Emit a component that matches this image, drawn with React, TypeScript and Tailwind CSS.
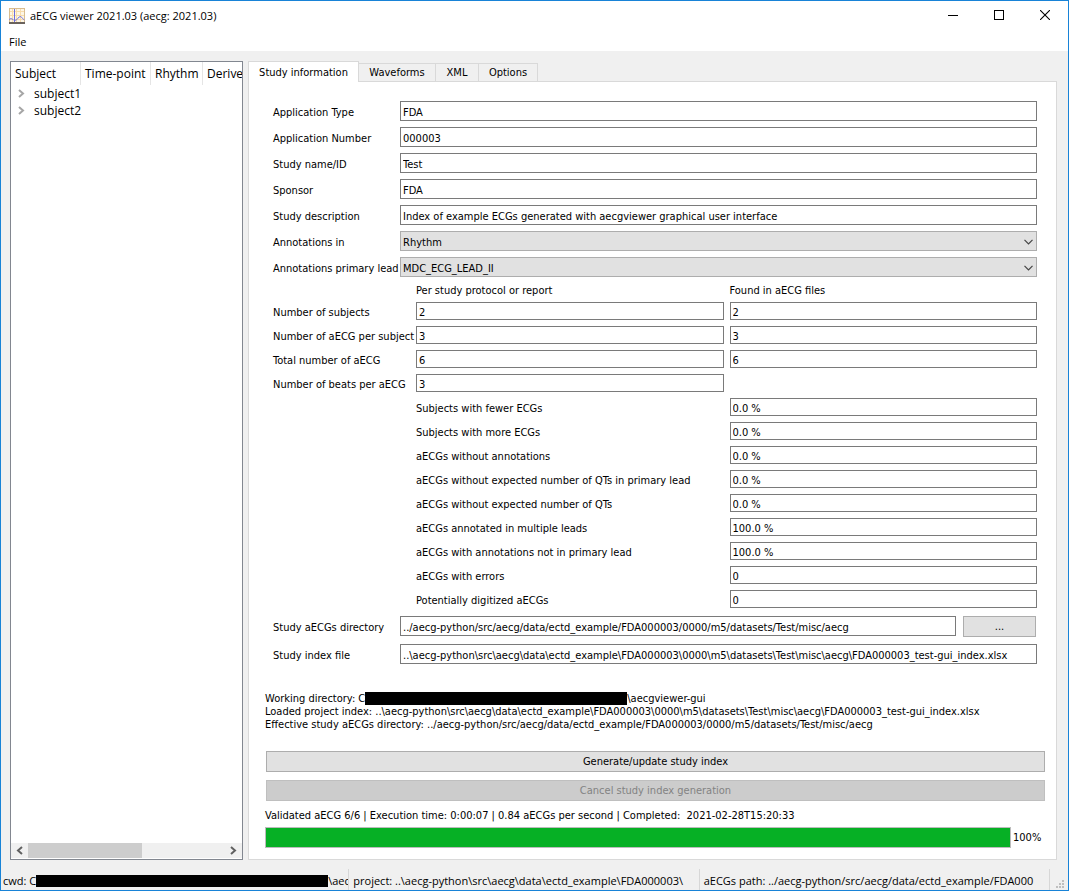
import React from "react";

type Field = { id: string; label: string; value: string };

const studyFields: Field[] = [
  { id: "app-type", label: "Application Type", value: "FDA" },
  { id: "app-number", label: "Application Number", value: "000003" },
  { id: "study-name", label: "Study name/ID", value: "Test" },
  { id: "sponsor", label: "Sponsor", value: "FDA" },
  {
    id: "description",
    label: "Study description",
    value: "Index of example ECGs generated with aecgviewer graphical user interface",
  },
];

const studySelects: Field[] = [
  { id: "annotations-in", label: "Annotations in", value: "Rhythm" },
  { id: "primary-lead", label: "Annotations primary lead", value: "MDC_ECG_LEAD_II" },
];

const countRows: { id: string; label: string; expected: string; found?: string }[] = [
  { id: "subjects", label: "Number of subjects", expected: "2", found: "2" },
  { id: "per-subject", label: "Number of aECG per subject", expected: "3", found: "3" },
  { id: "total", label: "Total number of aECG", expected: "6", found: "6" },
  { id: "beats", label: "Number of beats per aECG", expected: "3" },
];

const checkRows: Field[] = [
  { id: "fewer", label: "Subjects with fewer ECGs", value: "0.0 %" },
  { id: "more", label: "Subjects with more ECGs", value: "0.0 %" },
  { id: "no-annotations", label: "aECGs without annotations", value: "0.0 %" },
  { id: "qts-primary", label: "aECGs without expected number of QTs in primary lead", value: "0.0 %" },
  { id: "qts", label: "aECGs without expected number of QTs", value: "0.0 %" },
  { id: "multi-leads", label: "aECGs annotated in multiple leads", value: "100.0 %" },
  { id: "not-primary", label: "aECGs with annotations not in primary lead", value: "100.0 %" },
  { id: "errors", label: "aECGs with errors", value: "0" },
  { id: "digitized", label: "Potentially digitized aECGs", value: "0" },
];

const inputBase = "w-full min-w-0 border border-[#7a7a7a] bg-white px-0.5 pt-0.5 outline-none";
const tallInput = inputBase + " h-5";
const shortInput = inputBase + " h-[18px]";
const labelStyle = "pt-0.5 whitespace-nowrap";

function AppIcon() {
  return (
    <svg width="16" height="16" viewBox="0 0 16 16" aria-hidden="true" shapeRendering="crispEdges">
      <rect width="16" height="16" fill="#fdf6e6" />
      <path d="M3.5 0v16M7.5 0v16M11.5 0v16M0 3.5h16M0 7.5h16M0 11.5h16" stroke="#f8dcab" />
      <path d="M.5 15V.5h15V15" fill="none" stroke="#d9bd8f" />
      <path d="M0 15.5h16M0 14.5h16" stroke="#6a625c" />
      <path
        d="M0 11.5l2-1 2 1 1 1"
        fill="none"
        stroke="#7d7de0"
        shapeRendering="auto"
      />
      <path d="M5.5 1v13" stroke="#6f6fdc" />
      <path d="M6 12.5l2-1 2-2.5 2-.5 1.5 2 2 1.5" fill="none" stroke="#7d7de0" shapeRendering="auto" />
    </svg>
  );
}

function Chevron({ direction, className }: { direction: "left" | "right"; className: string }) {
  return (
    <svg width="7" height="9" viewBox="0 0 7 9" className={className} fill="none" aria-hidden="true">
      <path d={direction === "right" ? "M1 1l4 3.5L1 8" : "M6 1L2 4.5 6 8"} stroke="currentColor" strokeWidth="2" />
    </svg>
  );
}

function TitleBar() {
  const button = "flex h-full w-[46px] items-center justify-center pb-0.5";
  return (
    <header className="flex h-[30px] items-center bg-white pl-2">
      <AppIcon />
      <h1 className="flex-1 pl-[5px]">aECG viewer 2021.03 (aecg: 2021.03)</h1>
      <button className={button} aria-label="Minimize">
        <svg width="10" height="10" viewBox="0 0 10 10" shapeRendering="crispEdges">
          <path d="M0 5.5h10" stroke="#000" />
        </svg>
      </button>
      <button className={button} aria-label="Maximize">
        <svg width="10" height="10" viewBox="0 0 10 10" shapeRendering="crispEdges">
          <rect x=".5" y=".5" width="9" height="9" fill="none" stroke="#000" />
        </svg>
      </button>
      <button className={button} aria-label="Close">
        <svg width="10" height="10" viewBox="0 0 10 10">
          <path d="M0 0l10 10M10 0L0 10" stroke="#000" strokeWidth="1.1" />
        </svg>
      </button>
    </header>
  );
}

function SubjectTree() {
  const head = "h-[23px] overflow-hidden border-r border-[#e5e5e5] pl-1 text-left font-normal whitespace-nowrap";
  return (
    <aside className="flex w-[233px] shrink-0 flex-col border border-[#828790] bg-white text-[12px]">
      <div className="flex-1 overflow-hidden">
        <table className="w-[300px] table-fixed border-separate border-spacing-0">
          <thead>
            <tr>
              <th className={head + " w-[70px]"}>Subject</th>
              <th className={head + " w-[70px]"}>Time-point</th>
              <th className={head + " w-[52px]"}>Rhythm</th>
              <th className={head}>Derived</th>
            </tr>
          </thead>
          <tbody>
            {["subject1", "subject2"].map((name) => (
              <tr key={name}>
                <td colSpan={4} className="h-[17px] p-0">
                  <button className="flex items-center pl-[7px] leading-[17px]">
                    <Chevron direction="right" className="mr-[9px] text-[#a6a6a6]" />
                    {name}
                  </button>
                </td>
              </tr>
            ))}
          </tbody>
        </table>
      </div>
      <div className="mb-px flex h-[15px] items-center bg-[#f0f0f0]">
        <button className="flex h-full w-[17px] items-center justify-center" aria-label="Scroll left">
          <Chevron direction="left" className="text-[#606060]" />
        </button>
        <div className="h-full flex-1">
          <div className="h-full w-[58%] bg-[#cdcdcd]" />
        </div>
        <button className="flex h-full w-[17px] items-center justify-center" aria-label="Scroll right">
          <Chevron direction="right" className="text-[#606060]" />
        </button>
      </div>
    </aside>
  );
}

function Tabs() {
  const idle = "h-[18px] border-t border-r border-[#d9d9d9] bg-[#f0f0f0]";
  return (
    <div role="tablist" className="relative z-10 flex h-5 items-end">
      <button
        role="tab"
        aria-selected="true"
        className="-mb-px h-[21px] w-[111px] self-start border border-b-0 border-[#d9d9d9] bg-white"
      >
        Study information
      </button>
      <button role="tab" aria-selected="false" className={idle + " w-[77px]"}>Waveforms</button>
      <button role="tab" aria-selected="false" className={idle + " w-[43px]"}>XML</button>
      <button role="tab" aria-selected="false" className={idle + " w-[59px]"}>Options</button>
    </div>
  );
}

function StudyForm() {
  return (
    <form className="pr-[19px] pl-6">
      <div className="grid grid-cols-[127px_1fr] items-center gap-y-1.5">
        {studyFields.map((f) => (
          <React.Fragment key={f.id}>
            <label htmlFor={f.id} className={labelStyle}>{f.label}</label>
            <input id={f.id} defaultValue={f.value} className={tallInput} />
          </React.Fragment>
        ))}
        {studySelects.map((f) => (
          <React.Fragment key={f.id}>
            <label htmlFor={f.id} className={labelStyle}>{f.label}</label>
            <div className="relative">
              <select
                id={f.id}
                className="block h-5 w-full appearance-none border border-[#adadad] bg-[#e1e1e1] px-0.5 pt-0.5 outline-none"
              >
                <option>{f.value}</option>
              </select>
              <svg
                width="9"
                height="6"
                viewBox="0 0 9 6"
                fill="none"
                className="pointer-events-none absolute top-2 right-1"
                aria-hidden="true"
              >
                <path d="M.5 .8l4 4 4-4" stroke="#444" strokeWidth="1.2" />
              </svg>
            </div>
          </React.Fragment>
        ))}
      </div>

      <div className="mt-[7px] grid grid-cols-[137px_1fr_1fr] items-center gap-x-1.5 gap-y-1.5">
        <span className="col-start-2 h-3">Per study protocol or report</span>
        <span className="h-3">Found in aECG files</span>
        {countRows.map((r) => (
          <React.Fragment key={r.id}>
            <label htmlFor={r.id} className={labelStyle + " col-start-1"}>{r.label}</label>
            <input id={r.id} defaultValue={r.expected} className={shortInput} />
            {r.found && (
              <input aria-label={r.label + " found"} defaultValue={r.found} className={shortInput} />
            )}
          </React.Fragment>
        ))}
        {checkRows.map((r) => (
          <React.Fragment key={r.id}>
            <label htmlFor={r.id} className={labelStyle + " col-start-2"}>{r.label}</label>
            <input id={r.id} defaultValue={r.value} className={shortInput} />
          </React.Fragment>
        ))}
      </div>

      <div className="mt-2 grid grid-cols-[127px_1fr] items-center gap-y-[7px]">
        <label htmlFor="directory" className={labelStyle}>Study aECGs directory</label>
        <div className="flex items-start gap-[7px] pr-px">
          <input
            id="directory"
            defaultValue="../aecg-python/src/aecg/data/ectd_example/FDA000003/0000/m5/datasets/Test/misc/aecg"
            className={tallInput + " flex-1"}
          />
          <button type="button" className="h-[21px] w-[73px] border border-[#adadad] bg-[#e1e1e1]">
            ...
          </button>
        </div>
        <label htmlFor="index-file" className={labelStyle}>Study index file</label>
        <input
          id="index-file"
          defaultValue="..\aecg-python\src\aecg\data\ectd_example\FDA000003\0000\m5\datasets\Test\misc\aecg\FDA000003_test-gui_index.xlsx"
          className={tallInput}
        />
      </div>
    </form>
  );
}

function StudyPanel() {
  return (
    <section
      role="tabpanel"
      className="flex-1 border border-[#d9d9d9] bg-white pt-[19px] pb-[11px]"
    >
      <StudyForm />
      <div className="mt-7 pr-[11px] pl-4">
        <div className="whitespace-nowrap">
          <p className="flex items-center">
            Working directory: C
            <span className="h-[13px] w-[262px] bg-black" />
            \aecgviewer-gui
          </p>
          <p>
            {"Loaded project index: ..\\aecg-python\\src\\aecg\\data\\ectd_example\\FDA000003\\0000\\m5\\datasets\\Test\\misc\\aecg\\FDA000003_test-gui_index.xlsx"}
          </p>
          <p>
            Effective study aECGs directory: ../aecg-python/src/aecg/data/ectd_example/FDA000003/0000/m5/datasets/Test/misc/aecg
          </p>
        </div>
        <div className="mt-5 flex flex-col gap-2 pl-px">
          <button className="h-[21px] w-full border border-[#adadad] bg-[#e1e1e1]">
            Generate/update study index
          </button>
          <button disabled className="h-[21px] w-full border border-[#bfbfbf] bg-[#cccccc] text-[#838383]">
            Cancel study index generation
          </button>
        </div>
        <p className="mt-2 whitespace-pre">
          {"Validated aECG 6/6 | Execution time: 0:00:07 | 0.84 aECGs per second | Completed:  2021-02-28T15:20:33"}
        </p>
        <div className="mt-[5px] flex items-center gap-0.5">
          <div
            role="progressbar"
            aria-label="Index generation"
            aria-valuenow={100}
            className="h-[21px] flex-1 border border-[#bcbcbc] bg-[#06b025]"
          />
          <span className="w-8">100%</span>
        </div>
      </div>
    </section>
  );
}

function StatusBar() {
  const cell = "flex min-w-0 flex-1 basis-0 items-center overflow-hidden border-r border-[#d7d7d7] pt-0.5 whitespace-nowrap";
  return (
    <footer className="flex h-[25px] items-stretch pt-1 pr-1 pl-0.5">
      <div className={cell}>
        cwd: C
        <span className="h-3 w-[292px] shrink-0 bg-black" />
        \aec
      </div>
      <div className={cell + " pl-1"}>
        {"project: ..\\aecg-python\\src\\aecg\\data\\ectd_example\\FDA000003\\"}
      </div>
      <div className={cell + " pl-1"}>
        aECGs path: ../aecg-python/src/aecg/data/ectd_example/FDA000
      </div>
      <svg width="14" height="10" viewBox="0 0 14 10" className="self-end" fill="#bfbfbf" aria-hidden="true">
        <path d="M12 0h2v2h-2zM9 3h2v2H9zM12 3h2v2h-2zM6 6h2v2H6zM9 6h2v2H9zM12 6h2v2h-2z" />
      </svg>
    </footer>
  );
}

export default function App() {
  return (
    <div className="flex min-h-screen flex-col border border-[#1883d7] bg-[#f0f0f0] font-['Open_Sans','Noto_Sans',sans-serif] text-[11px] leading-4 text-black">
      <TitleBar />
      <nav className="flex h-5 items-center bg-white pt-0.5 pl-2">
        <button>File</button>
      </nav>
      <main className="flex flex-1 gap-[5px] pt-2.5 pr-[11px] pb-[5px] pl-[9px]">
        <SubjectTree />
        <div className="flex min-w-0 flex-1 flex-col font-['DejaVu_Sans_Condensed','DejaVu_Sans',sans-serif] text-[11px] leading-[13px]">
          <Tabs />
          <StudyPanel />
        </div>
      </main>
      <StatusBar />
    </div>
  );
}
